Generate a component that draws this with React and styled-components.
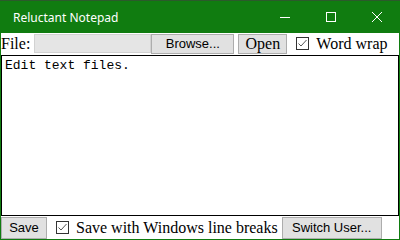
import React from "react";
import styled, { createGlobalStyle } from "styled-components";

const GlobalStyle = createGlobalStyle`
  html, body {
    margin: 0;
    padding: 0;
    background: #ffffff;
  }
`;

const Window = styled.div`
  /* Display & Box Model */
  width: 400px;
  height: 240px;
  box-sizing: border-box;
  display: flex;
  flex-direction: column;
  /* Styling */
  background: #ffffff;
  border: 1px solid #107c10;
  border-top: none;
`;

const TitleBar = styled.div`
  /* Display & Box Model */
  height: 33px;
  margin: 0 -1px;
  display: flex;
  align-items: center;
  /* Styling */
  background: #107c10;
  border-top: 1px solid #2b5a2b;
  box-sizing: border-box;
`;

const Title = styled.div`
  flex: 1;
  padding-left: 13px;
  color: #ffffff;
  font-family: "Segoe UI", "Noto Sans", "DejaVu Sans", sans-serif;
  font-size: 12px;
`;

const Control = styled.div`
  width: 46px;
  height: 32px;
  display: flex;
  align-items: center;
  justify-content: center;
`;

const Toolbar = styled.div`
  /* Display & Box Model */
  display: flex;
  align-items: center;
  height: 21px;
  /* Text */
  font-family: "Liberation Serif", "Times New Roman", serif;
  font-size: 16px;
  color: #000000;
`;

const Label = styled.span`
  padding-left: ${p => p.$left || 0}px;
  padding-right: ${p => p.$right || 0}px;
  white-space: nowrap;
`;

const FileBox = styled.div`
  width: 117px;
  height: 19px;
  margin-left: 4px;
  box-sizing: border-box;
  background: #e5e5e5;
  border: 1px solid #d2d2d2;
`;

const Button = styled.div`
  /* Display & Box Model */
  width: ${p => p.$width}px;
  height: ${p => p.$height || 20}px;
  box-sizing: border-box;
  margin-left: ${p => p.$left || 0}px;
  display: flex;
  align-items: center;
  justify-content: center;
  /* Styling */
  background: #e1e1e1;
  border: 1px solid #adadad;
  color: #000000;
  /* Text */
  font-family: ${p => (p.$serif ? `"Liberation Serif", "Times New Roman", serif` : `"Liberation Sans", Arial, sans-serif`)};
  font-size: ${p => (p.$serif ? 16 : 13)}px;
  white-space: nowrap;
`;

const Check = styled.div`
  width: 13px;
  height: 13px;
  box-sizing: border-box;
  margin-left: ${p => p.$left || 0}px;
  border: 1px solid #333333;
  background: #ffffff;
  display: flex;
  align-items: center;
  justify-content: center;
`;

const Editor = styled.div`
  /* Display & Box Model */
  flex: 1;
  margin-top: 1px;
  padding: 2px 3px;
  box-sizing: border-box;
  /* Styling */
  border: 1px solid #000000;
  /* Text */
  font-family: "Liberation Mono", "Courier New", monospace;
  font-size: 13px;
  color: #000000;
`;

const Footer = styled.div`
  display: flex;
  align-items: center;
  height: 23px;
  font-family: "Liberation Serif", "Times New Roman", serif;
  font-size: 16px;
  color: #000000;
`;

const Tick = () => (
  <svg width="11" height="11" viewBox="0 0 11 11">
    <path d="M1.5 5.5 L4 8 L9.5 2" fill="none" stroke="#555" strokeWidth="1" />
  </svg>
);

export default function App() {
  return (
    <>
      <GlobalStyle />
      <Window>
        <TitleBar>
          <Title>Reluctant Notepad</Title>
          <Control>
            <svg width="10" height="10" viewBox="0 0 10 10">
              <path d="M0 5.5 H10" stroke="#fff" strokeWidth="1" />
            </svg>
          </Control>
          <Control>
            <svg width="10" height="10" viewBox="0 0 10 10">
              <rect x="0.5" y="0.5" width="9" height="9" fill="none" stroke="#fff" strokeWidth="1" />
            </svg>
          </Control>
          <Control>
            <svg width="10" height="10" viewBox="0 0 10 10">
              <path d="M0 0 L10 10 M10 0 L0 10" stroke="#fff" strokeWidth="1" />
            </svg>
          </Control>
        </TitleBar>
        <Toolbar>
          <Label>File:</Label>
          <FileBox />
          <Button $width={83}>Browse...</Button>
          <Button $serif $left={4} $width={49}>Open</Button>
          <Check $left={9}><Tick /></Check>
          <Label $left={7}>Word wrap</Label>
        </Toolbar>
        <Editor>Edit text files.</Editor>
        <Footer>
          <Button $height={22} $width={46}>Save</Button>
          <Check $left={9}><Tick /></Check>
          <Label $left={7}>Save with Windows line breaks</Label>
          <Button $height={22} $left={4} $width={100}>Switch User...</Button>
        </Footer>
      </Window>
    </>
  );
}
